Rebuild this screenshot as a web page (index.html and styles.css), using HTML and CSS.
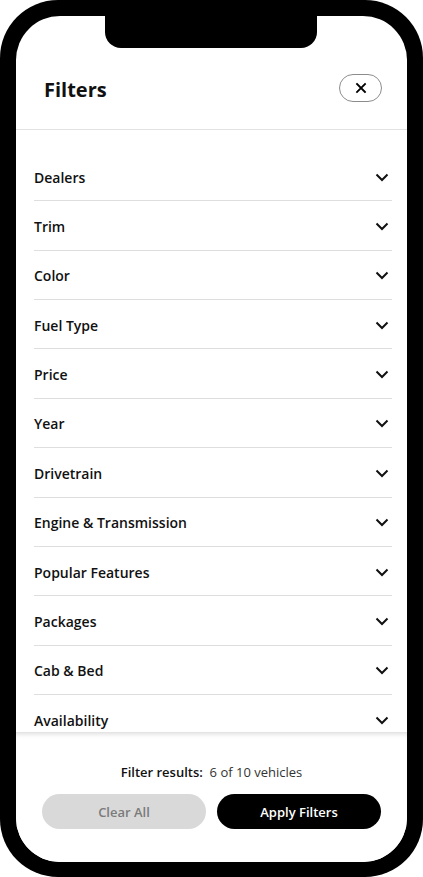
FILE: index.html
```html
<!DOCTYPE html>
<html lang="en">
<head>
<meta charset="utf-8">
<title>Filters</title>
<link rel="stylesheet" href="styles.css">
</head>
<body>
<div class="phone">
  <div class="screen">
    <div class="notch"></div>
    <header class="header">
      <h1 class="title">Filters</h1>
      <button class="close" aria-label="Close">
        <svg width="12" height="12" viewBox="0 0 12 12"><path d="M2 2 L10 10 M10 2 L2 10" stroke="#000" stroke-width="1.8" fill="none" stroke-linecap="square"/></svg>
      </button>
    </header>
    <div class="list">
      <div class="row"><span class="label">Dealers</span><svg class="chev" width="16" height="16" viewBox="0 0 16 16"><path d="M2.5 5.5 L8 11 L13.5 5.5" /></svg></div>
      <div class="row"><span class="label">Trim</span><svg class="chev" width="16" height="16" viewBox="0 0 16 16"><path d="M2.5 5.5 L8 11 L13.5 5.5" /></svg></div>
      <div class="row"><span class="label">Color</span><svg class="chev" width="16" height="16" viewBox="0 0 16 16"><path d="M2.5 5.5 L8 11 L13.5 5.5" /></svg></div>
      <div class="row"><span class="label">Fuel Type</span><svg class="chev" width="16" height="16" viewBox="0 0 16 16"><path d="M2.5 5.5 L8 11 L13.5 5.5" /></svg></div>
      <div class="row"><span class="label">Price</span><svg class="chev" width="16" height="16" viewBox="0 0 16 16"><path d="M2.5 5.5 L8 11 L13.5 5.5" /></svg></div>
      <div class="row"><span class="label">Year</span><svg class="chev" width="16" height="16" viewBox="0 0 16 16"><path d="M2.5 5.5 L8 11 L13.5 5.5" /></svg></div>
      <div class="row"><span class="label">Drivetrain</span><svg class="chev" width="16" height="16" viewBox="0 0 16 16"><path d="M2.5 5.5 L8 11 L13.5 5.5" /></svg></div>
      <div class="row"><span class="label">Engine &amp; Transmission</span><svg class="chev" width="16" height="16" viewBox="0 0 16 16"><path d="M2.5 5.5 L8 11 L13.5 5.5" /></svg></div>
      <div class="row"><span class="label">Popular Features</span><svg class="chev" width="16" height="16" viewBox="0 0 16 16"><path d="M2.5 5.5 L8 11 L13.5 5.5" /></svg></div>
      <div class="row"><span class="label">Packages</span><svg class="chev" width="16" height="16" viewBox="0 0 16 16"><path d="M2.5 5.5 L8 11 L13.5 5.5" /></svg></div>
      <div class="row"><span class="label">Cab &amp; Bed</span><svg class="chev" width="16" height="16" viewBox="0 0 16 16"><path d="M2.5 5.5 L8 11 L13.5 5.5" /></svg></div>
      <div class="row"><span class="label">Availability</span><svg class="chev" width="16" height="16" viewBox="0 0 16 16"><path d="M2.5 5.5 L8 11 L13.5 5.5" /></svg></div>
    </div>
    <footer class="footer">
      <p class="results"><b>Filter results:</b>&nbsp; 6 of 10 vehicles</p>
      <div class="actions">
        <button class="btn btn-clear">Clear All</button>
        <button class="btn btn-apply">Apply Filters</button>
      </div>
    </footer>
  </div>
</div>
</body>
</html>
```

FILE: styles.css
```css
* { box-sizing: border-box; }
html, body { margin: 0; padding: 0; background: #fff; }
body {
  font-family: "Open Sans", "Noto Sans", "Liberation Sans", sans-serif;
  color: #111;
  width: 423px;
  height: 877px;
  overflow: hidden;
}
.phone {
  width: 423px;
  height: 877px;
  background: #000;
  border-radius: 58px;
  padding: 16px 16px 15px 16px;
}
.screen {
  position: relative;
  width: 100%;
  height: 100%;
  background: #fff;
  border-radius: 44px;
  overflow: hidden;
  display: flex;
  flex-direction: column;
}
.notch {
  position: absolute;
  top: 0;
  left: 89px;
  width: 212px;
  height: 32px;
  background: #000;
  border-radius: 0 0 16px 16px;
}
.header {
  flex-shrink: 0;
  height: 114px;
  padding: 34px 25px 0 28px;
  border-bottom: 1px solid #e2e2e2;
  display: flex;
  align-items: center;
  justify-content: space-between;
}
.title {
  margin: 0;
  font-size: 20px;
  line-height: 28px;
  font-weight: 700;
  color: #111;
}
.close {
  width: 43px;
  height: 28px;
  margin-bottom: 3px;
  border: 1px solid #8c8c8c;
  border-radius: 14px;
  background: #fff;
  padding: 0;
  display: flex;
  align-items: center;
  justify-content: center;
}
.list {
  flex: 1;
  overflow: hidden;
  padding: 22px 15px 0 18px;
}
.row {
  height: 49.36px;
  padding-top: 3px;
  border-bottom: 1px solid #dedede;
  display: flex;
  align-items: center;
  justify-content: space-between;
}
.label {
  font-size: 14px;
  line-height: 20px;
  font-weight: 600;
  color: #111;
}
.chev {
  margin-right: 2px;
  margin-top: -2px;
}
.chev path {
  fill: none;
  stroke: #111;
  stroke-width: 2;
}
.footer {
  flex-shrink: 0;
  height: 130px;
  padding: 30px 26px 0 26px;
  background: #fff;
  box-shadow: inset 0 4px 5px -3px rgba(0, 0, 0, 0.14);
  border-top: 1px solid #e4e4e4;
}
.results {
  margin: 0;
  text-align: center;
  font-size: 13px;
  line-height: 18px;
  color: #333;
}
.results b { color: #111; font-weight: 600; }
.actions {
  margin-top: 13px;
  display: flex;
  gap: 11px;
}
.btn {
  flex: 1;
  height: 35px;
  border: none;
  border-radius: 18px;
  font-family: inherit;
  font-size: 13px;
  font-weight: 600;
  padding: 0;
}
.btn-clear { background: #d9d9d9; color: #7b7b7b; }
.btn-apply { background: #000; color: #fff; }
```
